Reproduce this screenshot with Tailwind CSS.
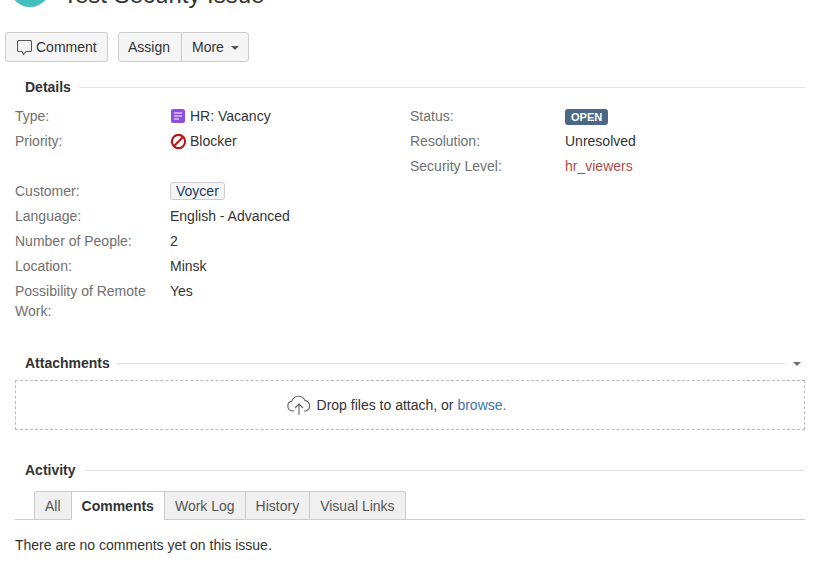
<!DOCTYPE html>
<html lang="en">
<head>
    <meta charset="UTF-8">
    <title>Test Security Issue</title>
    <script src="https://cdn.jsdelivr.net/npm/@tailwindcss/browser@4"></script>
</head>
<body class="bg-white font-['Liberation_Sans',Arial,sans-serif] text-[14px] leading-[20px] text-[#333] w-[816px] h-[562px] overflow-hidden">
    <!-- Issue header, cut by the top of the window -->
    <header class="flex items-end h-[7px] pl-[9px]">
        <div class="w-[42px] h-[42px] shrink-0 rounded-full bg-[#45c1bd]"></div>
        <h1 class="ml-[12px] text-[24px] leading-[30px] mb-[-3px] font-normal text-[#333]">Test Security Issue</h1>
    </header>

    <!-- Toolbar -->
    <div class="flex mt-[25px] ml-[5px] h-[30px]">
        <button class="flex items-center h-[30px] w-[103px] pl-[11px] border border-[#ccc] rounded-[3px] bg-[#f5f5f5] text-[#333]">
            <svg class="w-[15px] h-[17px] mr-[4px] mt-[1px]" viewBox="0 0 15 17" fill="none" stroke="#555" stroke-width="1.1">
                <path d="M2 1.5h11a1.5 1.5 0 0 1 1.5 1.5v8a1.5 1.5 0 0 1-1.5 1.5H9l-2.5 3-1.5-3H2A1.5 1.5 0 0 1 .5 11V3A1.5 1.5 0 0 1 2 1.5z"/>
            </svg>
            Comment
        </button>
        <button class="h-[30px] w-[64px] ml-[10px] pr-[2px] border border-[#ccc] rounded-l-[3px] bg-[#f5f5f5] text-[#333]">Assign</button>
        <button class="flex items-center h-[30px] w-[68px] ml-[-1px] pl-[10px] border border-[#ccc] rounded-r-[3px] bg-[#f5f5f5] text-[#333]">
            More
            <span class="ml-[7px] mt-[1px] w-0 h-0 border-x-[4px] border-x-transparent border-t-[4px] border-t-[#555]"></span>
        </button>
    </div>

    <!-- Details -->
    <section class="ml-[15px] w-[790px]">
        <div class="flex items-center mt-[15px] h-[20px] pl-[10px]">
            <h2 class="font-bold text-[14px] pr-[6px]">Details</h2>
            <div class="flex-1 h-px bg-[#e4e4e4] ml-[2px]"></div>
        </div>
        <div class="grid grid-cols-[395px_1fr] mt-[9px] h-[235px]">
            <dl class="grid grid-cols-[155px_1fr] auto-rows-[25px] content-start">
                <dt class="text-[#707070]">Type:</dt>
                <dd class="flex items-start">
                    <svg class="w-[16px] h-[16px] mt-[2px] mr-[4px]" viewBox="0 0 16 16">
                        <rect x="1" y="1" width="14" height="14" rx="2" fill="#904ee2"/>
                        <path d="M4 5h8M4 8h8M4 11h5" stroke="#fff" stroke-width="1.2"/>
                    </svg>
                    HR: Vacancy
                </dd>
                <dt class="text-[#707070]">Priority:</dt>
                <dd class="flex items-start">
                    <svg class="w-[17px] h-[17px] mt-[2px] mr-[3px]" viewBox="0 0 17 17" fill="none" stroke="#ba1818" stroke-width="2.2">
                        <circle cx="8.5" cy="8.5" r="6.6"/>
                        <path d="M4 13l9-9"/>
                    </svg>
                    Blocker
                </dd>
                <div class="col-span-2"></div>
                <dt class="text-[#707070]">Customer:</dt>
                <dd>
                    <span class="inline-block h-[18px] leading-[16px] px-[5px] border border-[#ccc] rounded-[3px] bg-[#f5f5f5] text-[#1b3a66]">Voycer</span>
                </dd>
                <dt class="text-[#707070]">Language:</dt>
                <dd>English - Advanced</dd>
                <dt class="text-[#707070]">Number of People:</dt>
                <dd>2</dd>
                <dt class="text-[#707070]">Location:</dt>
                <dd>Minsk</dd>
                <dt class="text-[#707070]">Possibility of Remote Work:</dt>
                <dd>Yes</dd>
            </dl>
            <dl class="grid grid-cols-[155px_1fr] auto-rows-[25px] content-start">
                <dt class="text-[#707070]">Status:</dt>
                <dd>
                    <span class="inline-flex items-center h-[16px] mt-[2px] px-[6px] rounded-[3px] bg-[#4a6785] text-white text-[11px] font-bold">OPEN</span>
                </dd>
                <dt class="text-[#707070]">Resolution:</dt>
                <dd>Unresolved</dd>
                <dt class="text-[#707070]">Security Level:</dt>
                <dd class="text-[#b04a4a]">hr_viewers</dd>
            </dl>
        </div>

        <!-- Attachments -->
        <div class="flex items-center mt-[12px] h-[20px] pl-[10px]">
            <h2 class="font-bold text-[14px] pr-[6px]">Attachments</h2>
            <div class="flex-1 h-px bg-[#e4e4e4]"></div>
            <span class="ml-[8px] mr-[4px] mt-[2px] w-0 h-0 border-x-[4px] border-x-transparent border-t-[4px] border-t-[#707070]"></span>
        </div>
        <div class="flex items-center justify-center mt-[7px] h-[50px] pr-[28px] border border-dashed border-[#bbb]">
            <svg class="w-[26px] h-[22px] mr-[5px]" viewBox="0 0 26 22" fill="none" stroke="#666" stroke-width="1.1">
                <path d="M8 17H6.5a5 5 0 0 1-.6-9.9A7 7 0 0 1 19 6.6a5.3 5.3 0 0 1 .6 10.4H18"/>
                <path d="M13 21V10M9 14l4-4 4 4"/>
            </svg>
            <span>Drop files to attach, or <a class="text-[#3b73af]">browse.</a></span>
        </div>

        <!-- Activity -->
        <div class="flex items-center mt-[30px] h-[20px] pl-[10px]">
            <h2 class="font-bold text-[14px] pr-[6px]">Activity</h2>
            <div class="flex-1 h-px bg-[#e4e4e4] ml-[2px]"></div>
        </div>
        <ul class="flex mt-[11px] h-[29px] pl-[19px] border-b border-[#ccc]">
            <li class="h-[28px] px-[10px] leading-[28px] border border-b-0 border-[#ccc] rounded-tl-[3px] bg-[#f0f0f0] text-[#555]">All</li>
            <li class="h-[29px] px-[10px] leading-[28px] font-bold bg-white border-r border-t border-[#ccc]">Comments</li>
            <li class="h-[28px] px-[10px] leading-[28px] border-t border-r border-[#ccc] bg-[#f0f0f0] text-[#555]">Work Log</li>
            <li class="h-[28px] px-[10px] leading-[28px] border-t border-r border-[#ccc] bg-[#f0f0f0] text-[#555]">History</li>
            <li class="h-[28px] px-[10px] leading-[28px] border-t border-r border-[#ccc] rounded-tr-[3px] bg-[#f0f0f0] text-[#555]">Visual Links</li>
        </ul>
        <p class="mt-[15px]">There are no comments yet on this issue.</p>
    </section>
</body>
</html>
